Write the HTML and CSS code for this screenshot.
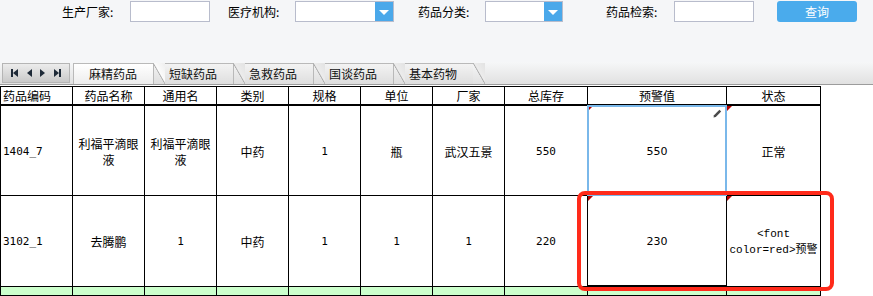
FILE: index.html
```html
<!DOCTYPE html>
<html lang="zh">
<head>
    <meta charset="UTF-8">
    <meta name="viewport" content="width=device-width, initial-scale=1.0">
    <link rel="stylesheet" href="styles.css">
</head>
<body>
    <!-- search bar -->
    <div class="search-bar">
        <label class="field-label label-first">生产厂家:</label>
        <input class="text-input" type="text">

        <label class="field-label label-org">医疗机构:</label>
        <div class="combo combo-wide">
            <div class="combo-box"></div>
            <div class="combo-arrow"></div>
        </div>

        <label class="field-label label-type">药品分类:</label>
        <div class="combo combo-narrow">
            <div class="combo-box"></div>
            <div class="combo-arrow"></div>
        </div>

        <label class="field-label label-search">药品检索:</label>
        <input class="text-input" type="text">

        <button class="btn-query">查询</button>
    </div>

    <!-- tab strip -->
    <div class="tab-strip">
        <div class="tab-nav">
            <span class="nav-btn nav-first"></span>
            <span class="nav-btn nav-prev"></span>
            <span class="nav-btn nav-next"></span>
            <span class="nav-btn nav-last"></span>
        </div>
        <div class="tab tab-active">麻精药品</div>
        <div class="tab">短缺药品</div>
        <div class="tab">急救药品</div>
        <div class="tab">国谈药品</div>
        <div class="tab">基本药物</div>
    </div>

    <!-- data grid -->
    <div class="grid-wrap">
        <table class="grid">
            <colgroup>
                <col class="col-std">
                <col class="col-std">
                <col class="col-std">
                <col class="col-std">
                <col class="col-std">
                <col class="col-std">
                <col class="col-std">
                <col class="col-stock">
                <col class="col-warn">
                <col class="col-state">
            </colgroup>
            <thead>
                <tr>
                    <th class="cell-left">药品编码</th>
                    <th>药品名称</th>
                    <th>通用名</th>
                    <th>类别</th>
                    <th>规格</th>
                    <th>单位</th>
                    <th>厂家</th>
                    <th>总库存</th>
                    <th>预警值</th>
                    <th>状态</th>
                </tr>
            </thead>
            <tbody>
                <tr class="data-row">
                    <td class="cell-left num">1404_7</td>
                    <td>利福平滴眼液</td>
                    <td>利福平滴眼液</td>
                    <td>中药</td>
                    <td class="num">1</td>
                    <td>瓶</td>
                    <td>武汉五景</td>
                    <td class="num">550</td>
                    <td class="dirty selected num-sans">
                        550
                        <svg class="pencil" width="9" height="9" viewBox="0 0 9 9">
                            <path d="M0.5 8.5 L1 6.2 L6.4 0.8 L8.2 2.6 L2.8 8 Z" fill="#4a4a4a"/>
                        </svg>
                    </td>
                    <td class="dirty">正常</td>
                </tr>
                <tr class="data-row">
                    <td class="cell-left num">3102_1</td>
                    <td>去腾鹏</td>
                    <td class="num">1</td>
                    <td>中药</td>
                    <td class="num">1</td>
                    <td class="num">1</td>
                    <td class="num">1</td>
                    <td class="num">220</td>
                    <td class="dirty num-sans cell-thick">230</td>
                    <td class="dirty mono">&lt;font color=red&gt;预警</td>
                </tr>
                <tr class="new-row">
                    <td></td><td></td><td></td><td></td><td></td>
                    <td></td><td></td><td></td><td></td><td></td>
                </tr>
            </tbody>
        </table>
        <div class="highlight-frame"></div>
    </div>
</body>
</html>
```

FILE: styles.css
```css
/* page */
body {
    margin: 0;
    background-color: #ffffff;
    font-family: "Liberation Sans", "Noto Sans CJK SC", sans-serif;
    font-size: 12px;
    color: #000;
    overflow: hidden;
}

/* search bar */
.search-bar {
    display: flex;
    align-items: flex-start;
    height: 62px;
    padding-left: 62px;
    background-color: #f5f6f8;
    box-sizing: border-box;
}

.field-label {
    width: 56px;
    height: 22px;
    line-height: 24px;
    white-space: nowrap;
    font-family: "Noto Sans CJK SC", sans-serif;
    font-size: 12px;
}

.label-org {
    margin-left: 18px;
}

.label-type {
    margin-left: 24px;
}

.label-search {
    margin-left: 43px;
}

.text-input {
    width: 80px;
    height: 21px;
    margin: 1px 0 0 12px;
    padding: 0;
    border: 1px solid #b8bccc;
    background: #fff;
    box-sizing: border-box;
    outline: none;
}

.combo {
    display: flex;
    height: 21px;
    margin: 1px 0 0 11px;
    border: 1px solid #b8bccc;
    box-sizing: border-box;
    background: #fff;
}

.combo-wide {
    width: 99px;
}

.combo-narrow {
    width: 78px;
}

.combo-box {
    flex: 1;
}

.combo-arrow {
    width: 18px;
    background-color: #4aa8ea;
    display: flex;
    align-items: center;
    justify-content: center;
}

.combo-arrow::after {
    content: "";
    border-left: 5px solid transparent;
    border-right: 5px solid transparent;
    border-top: 5px solid #fff;
    margin-top: 1px;
}

.btn-query {
    width: 80px;
    height: 21px;
    margin: 1px 0 0 23px;
    padding: 0;
    border: none;
    border-radius: 3px;
    background-color: #4aabec;
    color: #fff;
    font-family: "Noto Sans CJK SC", sans-serif;
    font-size: 12px;
}

/* tab strip */
.tab-strip {
    display: flex;
    align-items: flex-end;
    height: 23px;
    padding-left: 2px;
    background: linear-gradient(#f6f7f8, #e1e1e1);
    border-bottom: 1px solid #9c9c9c;
    box-sizing: border-box;
}

.tab-nav {
    display: flex;
    align-items: center;
    justify-content: space-around;
    width: 68px;
    height: 20px;
    margin-bottom: 1px;
    padding: 0 4px;
    box-sizing: border-box;
    background: linear-gradient(#ececec, #c9c9c9);
    border: 1px solid #b5b5b5;
}

.nav-btn {
    position: relative;
    width: 7px;
    height: 8px;
}

.nav-prev::after,
.nav-first::after {
    content: "";
    position: absolute;
    right: 0;
    top: 0;
    border-top: 4px solid transparent;
    border-bottom: 4px solid transparent;
    border-right: 5px solid #1e2a38;
}

.nav-next::after,
.nav-last::after {
    content: "";
    position: absolute;
    left: 0;
    top: 0;
    border-top: 4px solid transparent;
    border-bottom: 4px solid transparent;
    border-left: 5px solid #1e2a38;
}

.nav-first::before {
    content: "";
    position: absolute;
    left: 0;
    top: 0;
    width: 2px;
    height: 8px;
    background: #1e2a38;
}

.nav-last::before {
    content: "";
    position: absolute;
    right: 0;
    top: 0;
    width: 2px;
    height: 8px;
    background: #1e2a38;
}

.tab {
    position: relative;
    width: 80px;
    height: 21px;
    padding-left: 15px;
    box-sizing: border-box;
    line-height: 20px;
    font-family: "Noto Sans CJK SC", sans-serif;
    font-size: 12px;
    color: #111;
    background: linear-gradient(#f3f3f3, #dedede);
    border-top: 1px solid #b9b9b9;
    border-left: 1px solid #b9b9b9;
}

.tab-nav + .tab {
    margin-left: 3px;
}

.tab::after {
    content: "";
    position: absolute;
    top: -1px;
    right: -12px;
    width: 12px;
    height: 21px;
    background: linear-gradient(to top right, transparent 47%, #a8a8a8 50%, #ececec 55%, #e2e2e2);
    z-index: 1;
}

.tab-active {
    background: linear-gradient(#ffffff, #ededed);
    z-index: 2;
}

.tab-active::after {
    background: linear-gradient(to top right, transparent 47%, #a8a8a8 50%, #fbfbfb 55%, #eeeeee);
}

/* grid */
.grid-wrap {
    position: relative;
    padding-top: 1px;
}

.grid {
    table-layout: fixed;
    border-collapse: collapse;
    width: 821px;
    font-family: "Noto Sans CJK SC", sans-serif;
    font-size: 12px;
}

.col-std {
    width: 72px;
}

.col-stock {
    width: 83px;
}

.col-warn {
    width: 139px;
}

.col-state {
    width: 94px;
}

.grid th,
.grid td {
    border: 1px solid #000;
    padding: 0 1px;
    text-align: center;
    vertical-align: middle;
    line-height: 16px;
}

.grid th {
    height: 17px;
    font-weight: normal;
    border-bottom: 2px solid #000;
}

.grid .cell-left {
    text-align: left;
    padding-left: 2px;
}

.data-row td {
    height: 86px;
    padding-top: 3px;
    position: relative;
}

.num {
    font-family: "DejaVu Sans Mono", "Noto Sans CJK SC", monospace;
    font-size: 11px;
}

.num-sans {
    font-family: "DejaVu Sans", sans-serif;
    font-size: 11px;
}

.mono {
    font-family: "Liberation Mono", "Noto Sans CJK SC", monospace;
    font-size: 11px;
}

.cell-thick {
    border-bottom-width: 2px !important;
}

/* changed-cell markers */
.dirty::before {
    content: "";
    position: absolute;
    top: 0;
    left: 0;
    border-top: 5px solid #b50000;
    border-right: 5px solid transparent;
}

.selected::after {
    content: "";
    position: absolute;
    inset: -1px;
    border: 2px solid #7ab8ea;
}

.pencil {
    position: absolute;
    top: 3px;
    right: 4px;
}

.new-row td {
    height: 8px;
    background-color: #ccffcc;
}

/* red highlight around the warning cells */
.highlight-frame {
    position: absolute;
    left: 577px;
    top: 106px;
    width: 257px;
    height: 100px;
    border: 4px solid #ff2a1a;
    border-radius: 8px;
    box-sizing: border-box;
}
```
